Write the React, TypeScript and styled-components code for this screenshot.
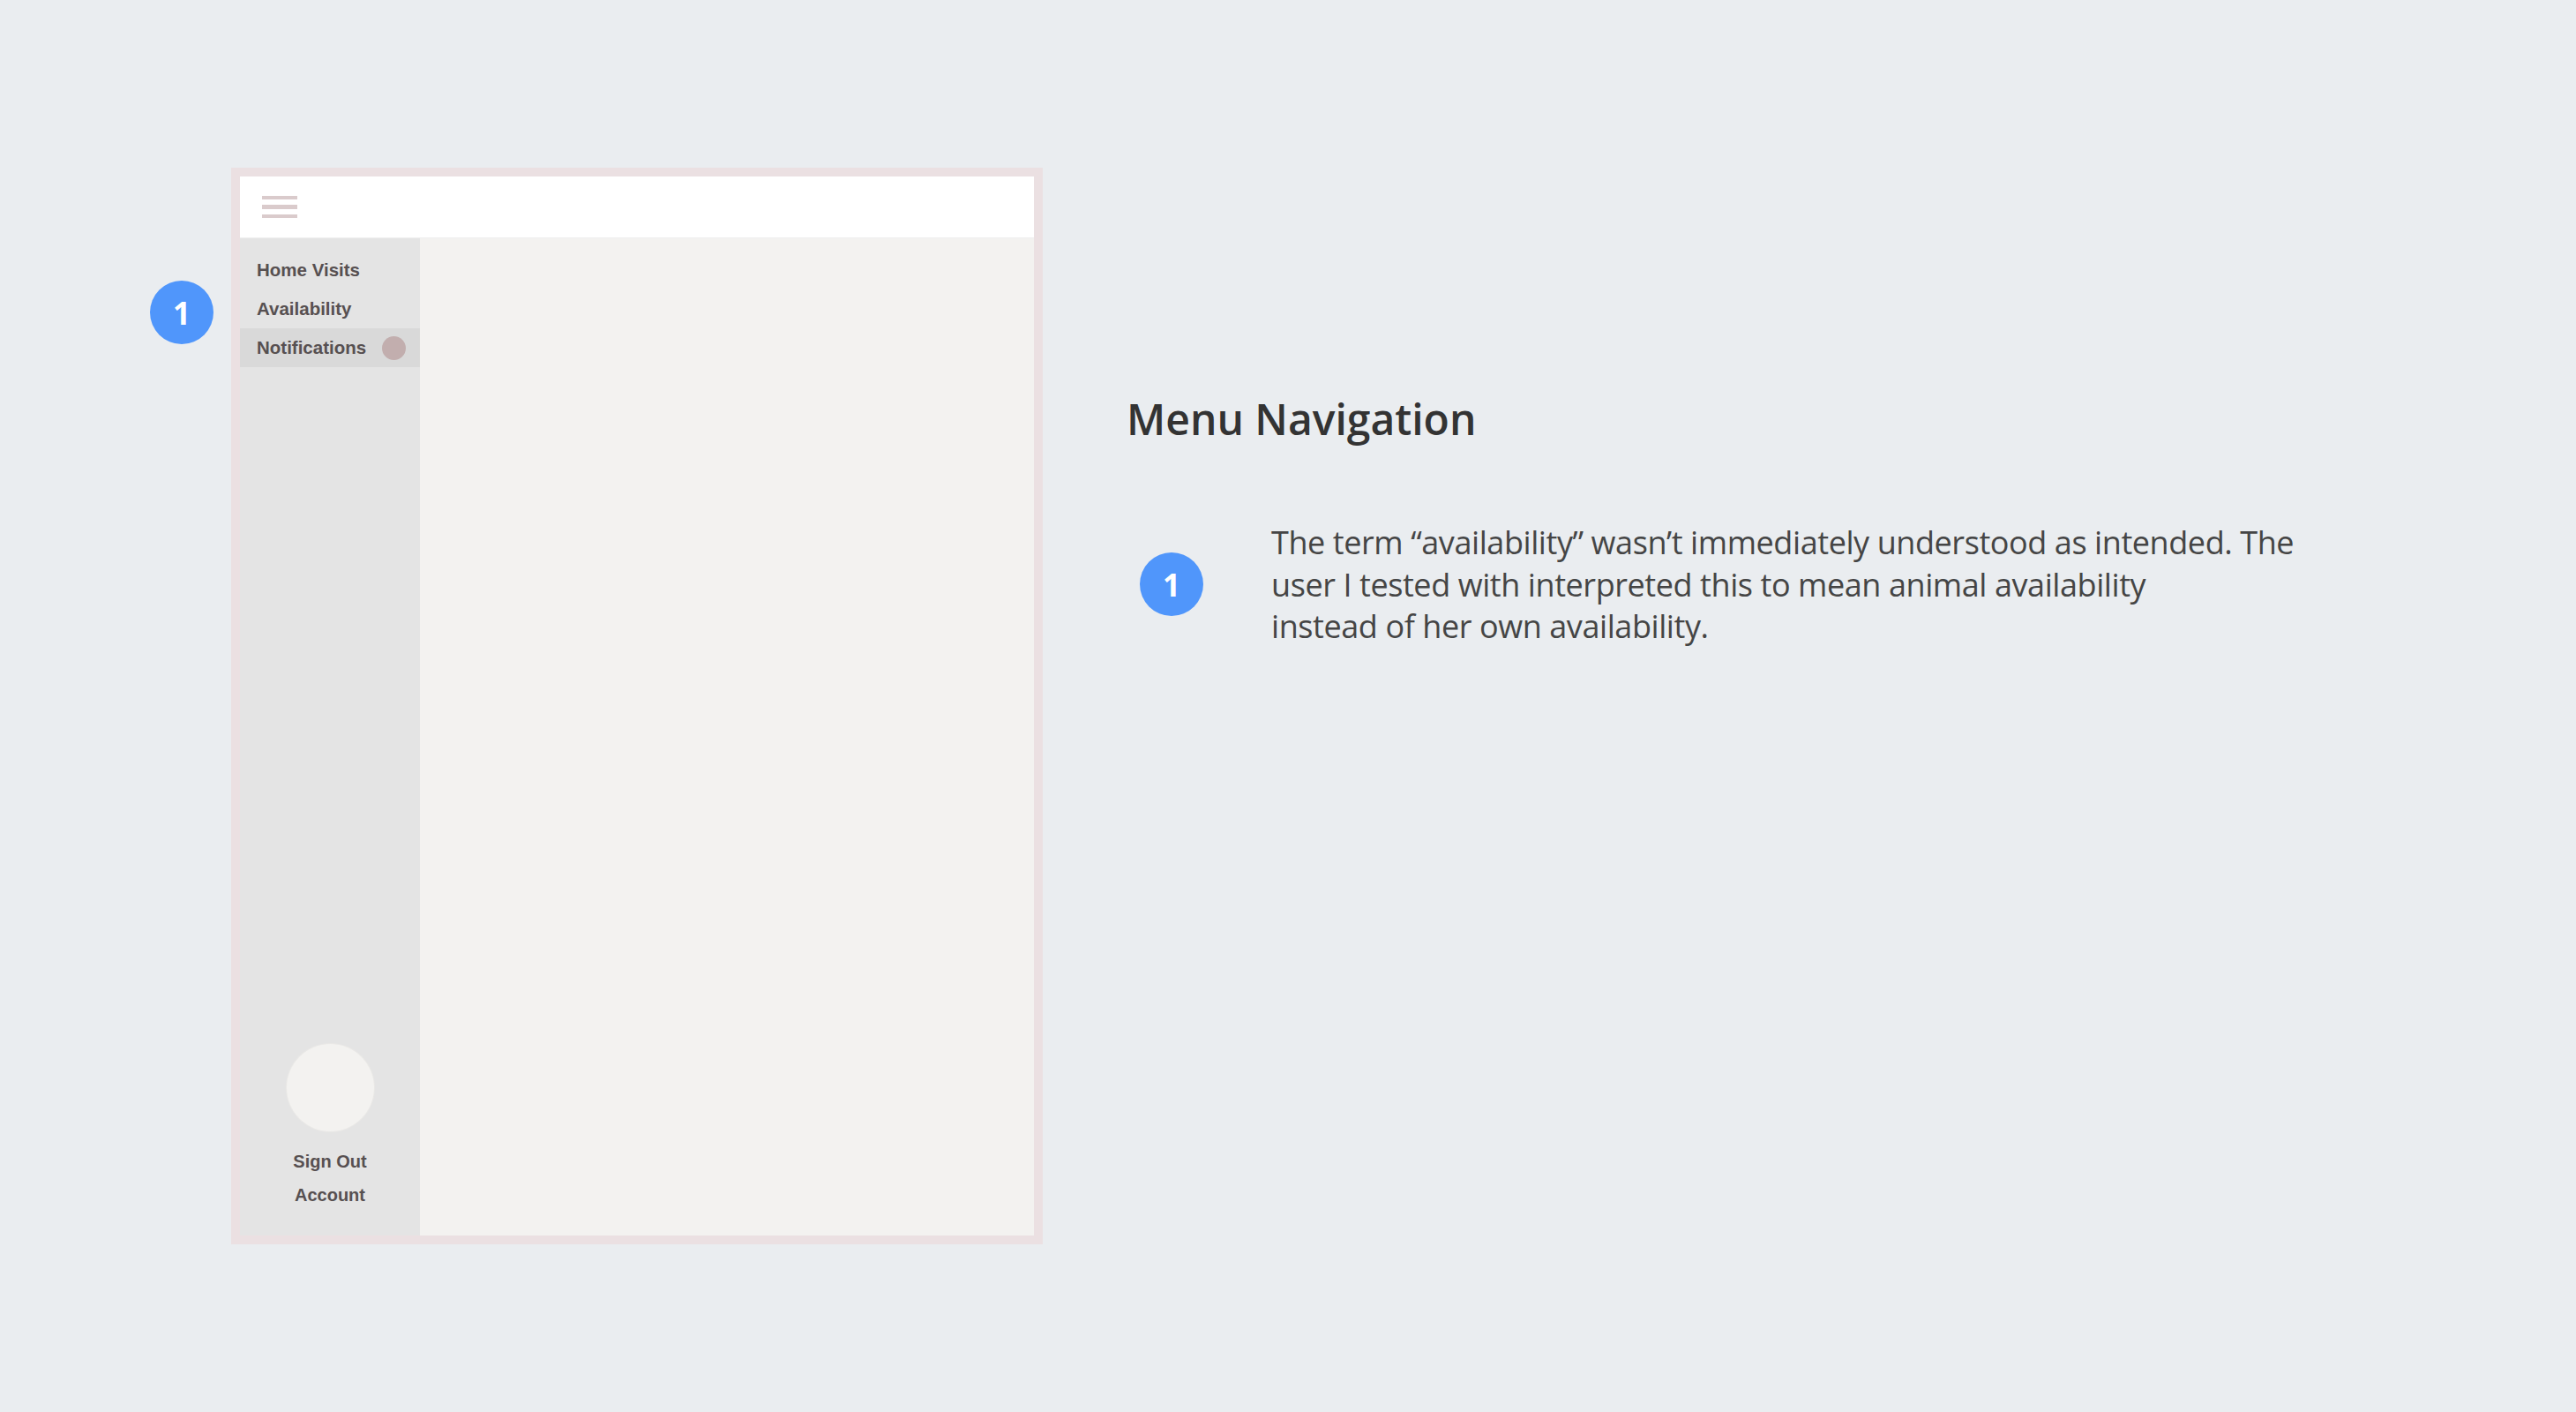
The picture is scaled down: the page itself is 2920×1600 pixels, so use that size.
import styled, { createGlobalStyle } from "styled-components";

const GlobalStyle = createGlobalStyle`
  html, body {
    margin: 0;
    padding: 0;
    background: #eaedf0;
  }
`;

const navItems = [
  { label: "Home Visits", active: false, dot: false },
  { label: "Availability", active: false, dot: false },
  { label: "Notifications", active: true, dot: true },
];

export default function App() {
  return (
    <>
      <GlobalStyle />
      <Page>
        <MarkerColumn>
          <Badge>1</Badge>
        </MarkerColumn>
        <Frame>
          <Header>
            <Hamburger>
              <span />
              <span />
              <span />
            </Hamburger>
          </Header>
          <Body>
            <Sidebar>
              <Nav>
                {navItems.map((item) => (
                  <NavItem key={item.label} $active={item.active}>
                    {item.label}
                    {item.dot && <Dot />}
                  </NavItem>
                ))}
              </Nav>
              <AccountBox>
                <Avatar />
                <AccountLink>Sign Out</AccountLink>
                <AccountLink>Account</AccountLink>
              </AccountBox>
            </Sidebar>
            <Content />
          </Body>
        </Frame>
        <Notes>
          <Title>Menu Navigation</Title>
          <Note>
            <Badge $offset={35}>1</Badge>
            <NoteText>
              The term “availability” wasn’t immediately understood as intended. The
              <br />
              user I tested with interpreted this to mean animal availability
              <br />
              instead of her own availability.
            </NoteText>
          </Note>
        </Notes>
      </Page>
    </>
  );
}

const Page = styled.div`
  width: 2920px;
  height: 1600px;
  box-sizing: border-box;
  padding: 190px 0 0 170px;
  display: flex;
  align-items: flex-start;
  background: #eaedf0;
`;

const MarkerColumn = styled.div`
  width: 72px;
  padding-top: 128px;
  margin-right: 20px;
`;

const Badge = styled.div<{ $offset?: number }>`
  flex: none;
  width: 72px;
  height: 72px;
  margin-top: ${(p) => p.$offset ?? 0}px;
  border-radius: 50%;
  background: #5096fb;
  color: #ffffff;
  display: flex;
  align-items: center;
  justify-content: center;
  font-family: "Open Sans", sans-serif;
  font-weight: 700;
  font-size: 35px;
  line-height: 1;
`;

const Frame = styled.div`
  width: 920px;
  height: 1220px;
  box-sizing: border-box;
  border: 10px solid #ebe0e2;
  display: flex;
  flex-direction: column;
`;

const Header = styled.div`
  height: 70px;
  flex: none;
  background: #ffffff;
  border-bottom: 1px solid #efefef;
  box-sizing: border-box;
  display: flex;
  align-items: center;
  padding-left: 25px;
`;

const Hamburger = styled.div`
  width: 40px;
  display: flex;
  flex-direction: column;
  gap: 6px;

  span {
    display: block;
    height: 4.5px;
    background: #dacbcc;
  }
`;

const Body = styled.div`
  flex: 1;
  display: flex;
  min-height: 0;
`;

const Sidebar = styled.div`
  width: 204px;
  flex: none;
  background: #e4e4e4;
  display: flex;
  flex-direction: column;
  justify-content: space-between;
  padding: 14px 0 27px;
  box-sizing: border-box;
`;

const Nav = styled.div`
  display: flex;
  flex-direction: column;
`;

const NavItem = styled.div<{ $active: boolean }>`
  height: 44px;
  line-height: 44px;
  padding-left: 19px;
  display: flex;
  align-items: center;
  gap: 18px;
  background: ${(p) => (p.$active ? "#d9d9d9" : "transparent")};
  font-family: "Liberation Sans", Arial, sans-serif;
  font-weight: 700;
  font-size: 20.5px;
  color: #575051;
`;

const Dot = styled.span`
  width: 27px;
  height: 27px;
  border-radius: 50%;
  background: #c2aeae;
`;

const AccountBox = styled.div`
  display: flex;
  flex-direction: column;
  align-items: center;
`;

const Avatar = styled.div`
  width: 99px;
  height: 99px;
  border-radius: 50%;
  background: #f3f2f0;
  box-shadow: 0 0 0 1px #e9e8e6;
  margin-bottom: 15px;
`;

const AccountLink = styled.div`
  font-family: "Liberation Sans", Arial, sans-serif;
  font-weight: 700;
  font-size: 20px;
  line-height: 38px;
  color: #575051;
`;

const Content = styled.div`
  flex: 1;
  background: #f3f2f0;
`;

const Notes = styled.div`
  margin-left: 95px;
  padding-top: 261px;
  display: flex;
  flex-direction: column;
`;

const Title = styled.h1`
  margin: 0 0 92px;
  font-family: "Open Sans", sans-serif;
  font-weight: 600;
  font-size: 48px;
  line-height: 48px;
  color: #333333;
`;

const Note = styled.div`
  display: flex;
  align-items: flex-start;
  padding-left: 15px;
  gap: 77px;
`;

const NoteText = styled.p`
  margin: 0;
  font-family: "Open Sans", sans-serif;
  font-weight: 400;
  font-size: 36px;
  line-height: 47.5px;
  letter-spacing: -0.42px;
  color: #454545;
  white-space: nowrap;
`;
